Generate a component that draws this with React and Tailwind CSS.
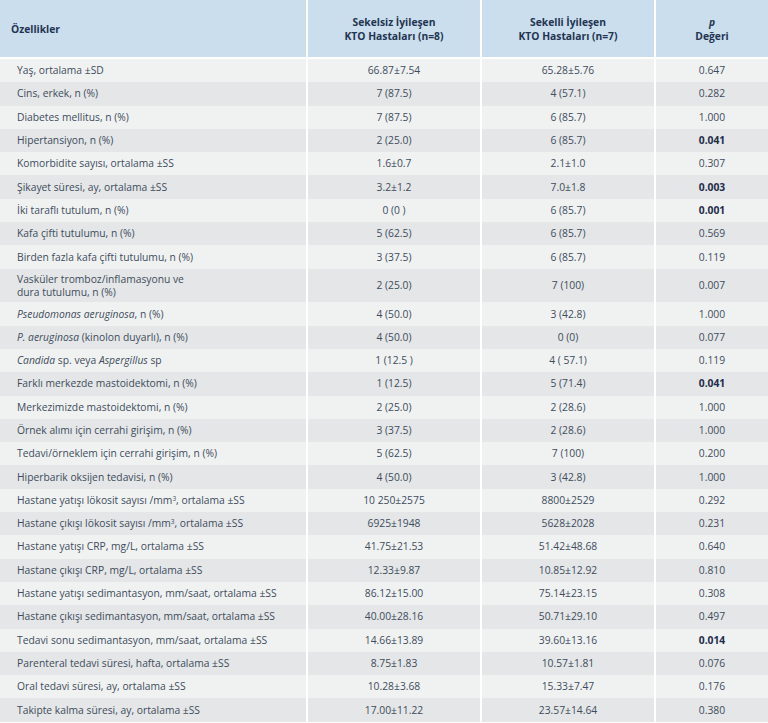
const rows = [
  ["Yaş, ortalama ±SD", "66.87±7.54", "65.28±5.76", "0.647"],
  ["Cins, erkek, n (%)", "7 (87.5)", "4 (57.1)", "0.282"],
  ["Diabetes mellitus, n (%)", "7 (87.5)", "6 (85.7)", "1.000"],
  ["Hipertansiyon, n (%)", "2 (25.0)", "6 (85.7)", "0.041", true],
  ["Komorbidite sayısı, ortalama ±SS", "1.6±0.7", "2.1±1.0", "0.307"],
  ["Şikayet süresi, ay, ortalama ±SS", "3.2±1.2", "7.0±1.8", "0.003", true],
  ["İki taraflı tutulum, n (%)", "0 (0 )", "6 (85.7)", "0.001", true],
  ["Kafa çifti tutulumu, n (%)", "5 (62.5)", "6 (85.7)", "0.569"],
  ["Birden fazla kafa çifti tutulumu, n (%)", "3 (37.5)", "6 (85.7)", "0.119"],
  [
    <>
      Vasküler tromboz/inflamasyonu ve
      <br />
      dura tutulumu, n (%)
    </>,
    "2 (25.0)",
    "7 (100)",
    "0.007",
    false,
    true,
  ],
  [<><i>Pseudomonas aeruginosa</i>, n (%)</>, "4 (50.0)", "3 (42.8)", "1.000"],
  [<><i>P. aeruginosa</i> (kinolon duyarlı), n (%)</>, "4 (50.0)", "0 (0)", "0.077"],
  [<><i>Candida</i> sp. veya <i>Aspergillus</i> sp</>, "1 (12.5 )", "4 ( 57.1)", "0.119"],
  ["Farklı merkezde mastoidektomi, n (%)", "1 (12.5)", "5 (71.4)", "0.041", true],
  ["Merkezimizde mastoidektomi, n (%)", "2 (25.0)", "2 (28.6)", "1.000"],
  ["Örnek alımı için cerrahi girişim, n (%)", "3 (37.5)", "2 (28.6)", "1.000"],
  ["Tedavi/örneklem için cerrahi girişim, n (%)", "5 (62.5)", "7 (100)", "0.200"],
  ["Hiperbarik oksijen tedavisi, n (%)", "4 (50.0)", "3 (42.8)", "1.000"],
  [
    <>Hastane yatışı lökosit sayısı /mm<sup className="text-[6.5px]">3</sup>, ortalama ±SS</>,
    "10 250±2575",
    "8800±2529",
    "0.292",
  ],
  [
    <>Hastane çıkışı lökosit sayısı /mm<sup className="text-[6.5px]">3</sup>, ortalama ±SS</>,
    "6925±1948",
    "5628±2028",
    "0.231",
  ],
  ["Hastane yatışı CRP, mg/L, ortalama ±SS", "41.75±21.53", "51.42±48.68", "0.640"],
  ["Hastane çıkışı CRP, mg/L, ortalama ±SS", "12.33±9.87", "10.85±12.92", "0.810"],
  ["Hastane yatışı sedimantasyon, mm/saat, ortalama ±SS", "86.12±15.00", "75.14±23.15", "0.308"],
  ["Hastane çıkışı sedimantasyon, mm/saat, ortalama ±SS", "40.00±28.16", "50.71±29.10", "0.497"],
  ["Tedavi sonu sedimantasyon, mm/saat, ortalama ±SS", "14.66±13.89", "39.60±13.16", "0.014", true],
  ["Parenteral tedavi süresi, hafta, ortalama ±SS", "8.75±1.83", "10.57±1.81", "0.076"],
  ["Oral tedavi süresi, ay, ortalama ±SS", "10.28±3.68", "15.33±7.47", "0.176"],
  ["Takipte kalma süresi, ay, ortalama ±SS", "17.00±11.22", "23.57±14.64", "0.380"],
];

export default function App() {
  return (
    <div
      className="w-[768px] bg-white text-[10.3px] text-[#3e4c5c]"
      style={{ fontFamily: '"Open Sans", "Noto Sans", sans-serif' }}
    >
      {/* header */}
      <div className="grid grid-cols-[306px_172px_172px_112px] gap-x-[2px] mb-[2px] font-bold text-[10.3px] text-[#1f3551] leading-[14px]">
        <div className="h-[57px] bg-[#cbdeee] flex items-center pl-[11px]">Özellikler</div>
        <div className="h-[57px] bg-[#cbdeee] flex items-center justify-center text-center">
          <div>
            Sekelsiz İyileşen
            <br />
            KTO Hastaları (n=8)
          </div>
        </div>
        <div className="h-[57px] bg-[#cbdeee] flex items-center justify-center text-center">
          <div>
            Sekelli İyileşen
            <br />
            KTO Hastaları (n=7)
          </div>
        </div>
        <div className="h-[57px] bg-[#cbdeee] flex items-center justify-center text-center">
          <div>
            <i>p</i>
            <br />
            Değeri
          </div>
        </div>
      </div>

      {/* rows */}
      {rows.map(([label, a, b, p, bold, tall], i) => {
        const bg = i % 2 === 0 ? "bg-[#f0f2f2]" : "bg-[#e4e6e7]";
        const h = tall ? "h-[33.7px]" : "h-[23.3px]";
        return (
          <div key={i} className="grid grid-cols-[306px_172px_172px_112px] gap-x-[2px] leading-[13px]">
            <div className={`${bg} ${h} flex items-center pl-[17px]`}>
              <span>{label}</span>
            </div>
            <div className={`${bg} ${h} flex items-center justify-center`}>{a}</div>
            <div className={`${bg} ${h} flex items-center justify-center`}>{b}</div>
            <div
              className={`${bg} ${h} flex items-center justify-center ${
                bold ? "font-bold text-[#1f2d4a]" : ""
              }`}
            >
              {p}
            </div>
          </div>
        );
      })}
    </div>
  );
}
